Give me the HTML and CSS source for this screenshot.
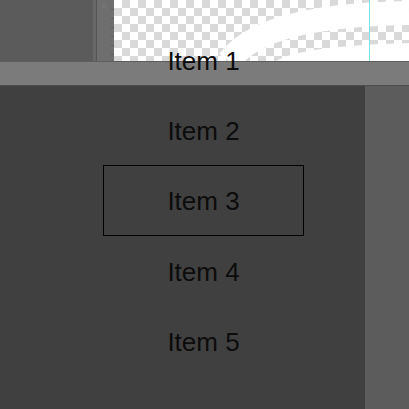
FILE: index.html
```html
<!DOCTYPE html>
<html lang="en">
<head>
  <meta charset="UTF-8">
  <title>Item Picker</title>
  <link rel="stylesheet" href="styles.css">
</head>
<body>

<div class="screen">
  <!-- Top strip: side panel, ruler and canvas -->
  <div class="top">
    <div class="side"></div>
    <div class="split"></div>
    <div class="ruler">
      <span class="ruler-zero">0</span>
      <div class="ticks">
        <i></i><i></i><i></i><i></i><i></i><i></i>
      </div>
    </div>
    <div class="canvas">
      <svg class="art" width="295" height="61" viewBox="114 0 295 61">
        <path d="M229 61 Q 262 15 409 13" fill="none" stroke="#fff" stroke-width="24"/>
        <path d="M276 61 Q 300 46 409 43 L 409 61 Z" fill="#fff"/>
      </svg>
      <div class="guide"></div>
    </div>
  </div>

  <!-- Toolbar bar -->
  <div class="bar"></div>

  <!-- Lower panels -->
  <div class="bottom">
    <div class="panel"></div>
    <div class="panel-right"></div>
  </div>

  <!-- Picker list laid over everything -->
  <ul class="picker">
    <li>Item 1</li>
    <li>Item 2</li>
    <li class="selected">Item 3</li>
    <li>Item 4</li>
    <li>Item 5</li>
  </ul>
</div>

</body>
</html>
```

FILE: styles.css
```css
* {box-sizing: border-box;}
body {margin: 0; font-family: "Liberation Sans", Arial, sans-serif;}

.screen {
  position: relative;
  width: 409px;
  height: 409px;
  overflow: hidden;
  display: flex;
  flex-direction: column;
  background-color: #404040;
}

/* Top strip */
.top {display: flex; height: 61px;}
.side {width: 93px; background-color: #5b5b5b;}
.split {
  width: 4px;
  background-color: #686868;
  border-right: 1px solid #555;
}
.ruler {
  width: 17px;
  background-color: #6e6e6e;
  position: relative;
}
.ruler-zero {
  position: absolute;
  left: 5px;
  top: 1px;
  font-size: 8px;
  color: #7c7c7c;
}
.ticks {
  display: flex;
  flex-direction: column;
  align-items: flex-end;
  gap: 8px;
  padding-top: 9px;
}
.ticks i {display: block; width: 3px; height: 1px; background-color: #5e5e5e;}

.canvas {
  flex: 1;
  position: relative;
  background-color: #fff;
  background-image: repeating-conic-gradient(#d9d9d9 0 25%, #fff 0 50%);
  background-size: 16px 16px;
}
.art {display: block;}
.guide {
  position: absolute;
  left: 255px;
  top: 0;
  width: 1px;
  height: 61px;
  background-color: #7fe3e6;
}

/* Toolbar bar */
.bar {
  height: 25px;
  background-color: #7b7b7b;
  border-top: 1px solid #5e5e5e;
  border-bottom: 1px solid #4e4e4e;
}

/* Lower panels */
.bottom {flex: 1; display: flex;}
.panel {width: 365px; background-color: #404040;}
.panel-right {flex: 1; background-color: #5c5c5c;}

/* Picker */
.picker {
  position: absolute;
  left: 103px;
  top: 25px;
  width: 201px;
  margin: 0;
  padding: 0;
  list-style: none;
}
.picker li {
  height: 70px;
  padding-top: 3px;
  display: flex;
  align-items: center;
  justify-content: center;
  font-size: 26px;
  color: #0c0c0c;
}
.picker li.selected {
  height: 71px;
  padding-top: 1px;
  border: 1px solid #000;
}
```
